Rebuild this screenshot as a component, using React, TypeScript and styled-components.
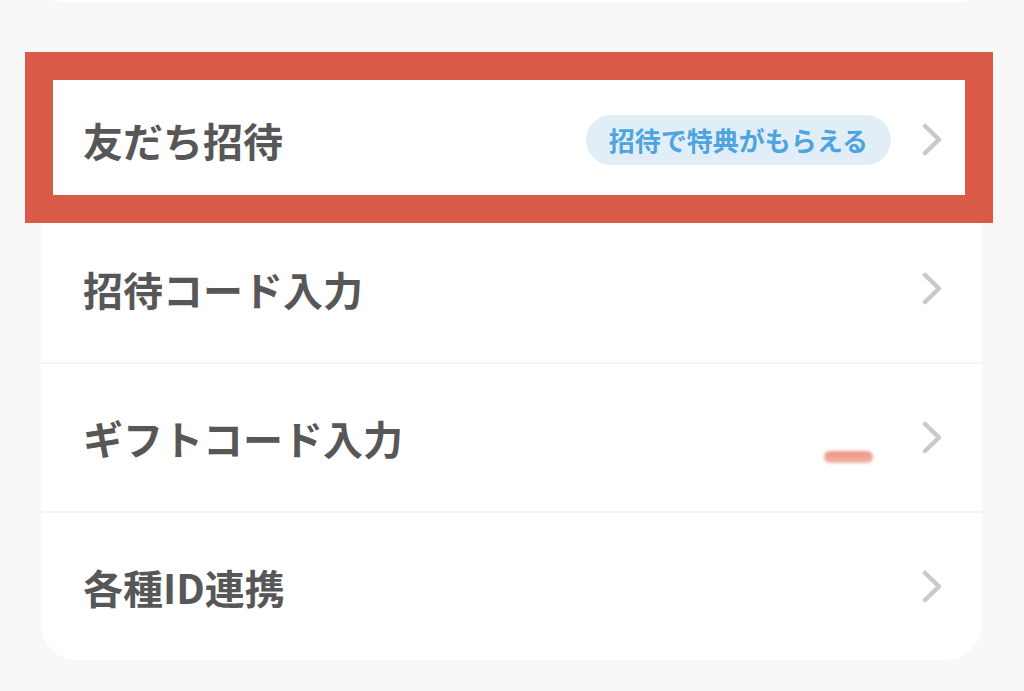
import React from "react";
import styled, { createGlobalStyle } from "styled-components";

const GlobalStyle = createGlobalStyle`
  html, body {
    margin: 0;
    padding: 0;
    background: #f8f8f8;
    font-family: "Noto Sans CJK JP", "Noto Sans", sans-serif;
  }
  * { box-sizing: border-box; }
`;

const Page = styled.div`
  width: 1024px;
  height: 691px;
  overflow: hidden;
  background: #f8f8f8;
  padding: 0 42px 0 41px;
  display: flex;
  flex-direction: column;
`;

const TopCard = styled.div`
  height: 40px;
  margin-top: -38px;
  background: #ffffff;
  border-radius: 36px;
  flex-shrink: 0;
`;

const Card = styled.div`
  position: relative;
  margin-top: 64px;
  background: #ffffff;
  border-radius: 36px;
  display: flex;
  flex-direction: column;
`;

const Row = styled.div<{ $divider?: boolean }>`
  height: ${(p) => (p.$divider ? 149 : 147)}px;
  border-top: ${(p) => (p.$divider ? "2px solid #f4f4f4" : "none")};
  display: flex;
  align-items: center;
  padding: 0 40px 0 42px;
`;

const Label = styled.span`
  flex: 1;
  font-size: 40px;
  font-weight: 700;
  color: #575757;
  line-height: 1;
  letter-spacing: 0;
`;

const Badge = styled.span`
  height: 50px;
  padding: 0 23px;
  border-radius: 25px;
  background: #e1eef8;
  color: #4ea4de;
  font-size: 26px;
  font-weight: 700;
  display: inline-flex;
  align-items: center;
  margin-right: 31px;
  line-height: 1;
`;

const Chevron = styled.svg`
  width: 20px;
  height: 33px;
  flex-shrink: 0;
`;

const Highlight = styled.div`
  position: absolute;
  left: -16px;
  top: -14px;
  width: 968px;
  height: 171px;
  border: 28px solid #d85a47;
  pointer-events: none;
`;

const PenMark = styled.span`
  position: absolute;
  left: 783px;
  top: 385px;
  width: 49px;
  height: 12px;
  border-radius: 6px;
  background: linear-gradient(180deg, rgba(232, 120, 100, 0.8), rgba(236, 140, 120, 0.65));
  filter: blur(1.4px);
  pointer-events: none;
`;

const Arrow = () => (
  <Chevron viewBox="0 0 20 33">
    <polyline
      points="3,3 17,16.5 3,30"
      fill="none"
      stroke="#c9c9c9"
      strokeWidth="4.5"
      strokeLinecap="round"
      strokeLinejoin="round"
    />
  </Chevron>
);

const items = [
  { label: "友だち招待", badge: "招待で特典がもらえる" },
  { label: "招待コード入力" },
  { label: "ギフトコード入力" },
  { label: "各種ID連携" },
];

export default function App() {
  return (
    <>
      <GlobalStyle />
      <Page>
        <TopCard />
        <Card>
          {items.map((it, i) => (
            <Row key={it.label} $divider={i > 0}>
              <Label>{it.label}</Label>
              {it.badge && <Badge>{it.badge}</Badge>}
              <Arrow />
            </Row>
          ))}
          <Highlight />
          <PenMark />
        </Card>
      </Page>
    </>
  );
}
